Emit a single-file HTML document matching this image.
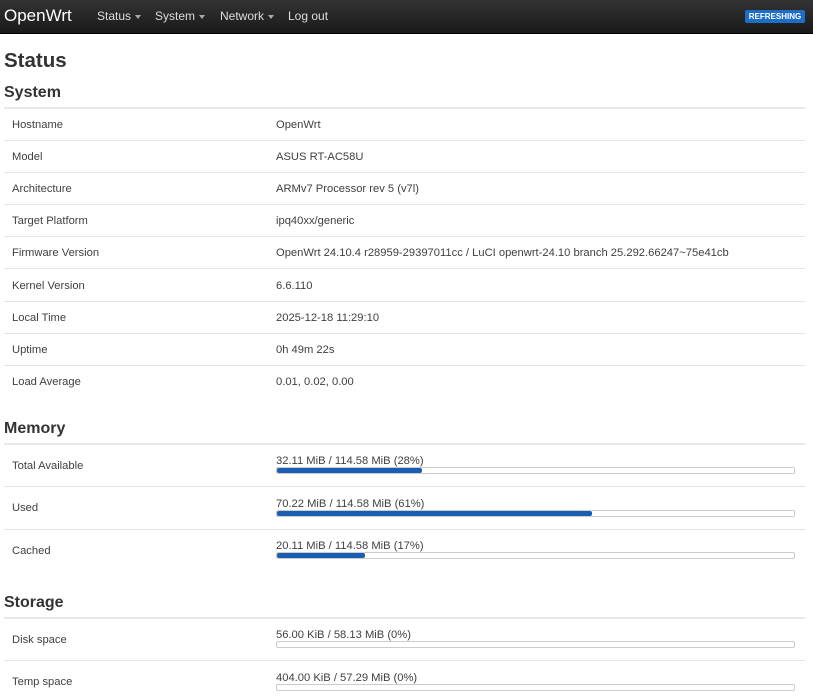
<!DOCTYPE html>
<html><head><style>
body{margin:0;font-family:"Liberation Sans",sans-serif;color:#404040;background:#fff;width:813px;height:700px;overflow:hidden;font-size:11.2px}
.nav{height:33px;background:linear-gradient(#333,#1a1a1a);position:relative;border-bottom:1px solid #000}
.brand{position:absolute;left:4px;top:6px;color:#fff;font-size:17px}
.menu{position:absolute;top:9px;color:#ddd;font-size:12px}
.caret{display:inline-block;border-top:4px solid #aaa;border-left:3.5px solid transparent;border-right:3.5px solid transparent;vertical-align:middle;margin-left:4px}
.badge{position:absolute;left:745px;top:10px;width:60px;height:13px;background:#1e6ec8;color:#fff;font-size:8px;font-weight:bold;text-align:center;line-height:13px;border-radius:2px}
h1{position:absolute;left:4px;top:49px;margin:0;font-size:20.5px;color:#333}
h2{position:absolute;left:4px;margin:0;font-size:16px;color:#333;font-weight:bold}
.line{position:absolute;left:4px;width:801px;height:1px;background:#e4e4e4}
.line.top{height:2px;background:#e8e8e8}
.l{position:absolute;left:12px;margin-top:1px}
.v{position:absolute;left:276px;margin-top:1px}
.bar{position:absolute;left:276px;width:517px;height:5px;border:1px solid #ccc;border-radius:2px;background:#fff}
.bar div{height:5px;background:#1a5eb3;border-radius:2px}
</style></head><body>
<div class="nav"><span class="brand">OpenWrt</span>
<span class="menu" style="left:97px">Status<span class="caret"></span></span>
<span class="menu" style="left:155px">System<span class="caret"></span></span>
<span class="menu" style="left:220px">Network<span class="caret"></span></span>
<span class="menu" style="left:288px">Log out</span>
<span class="badge">REFRESHING</span></div>
<h1>Status</h1>
<h2 style="top:84px">System</h2>
<div class="line top" style="top:107px"></div>
<div class="l" style="top:118px">Hostname</div><div class="v" style="top:118px">OpenWrt</div>
<div class="line" style="top:140px"></div>
<div class="l" style="top:150px">Model</div><div class="v" style="top:150px">ASUS RT-AC58U</div>
<div class="line" style="top:172px"></div>
<div class="l" style="top:182px">Architecture</div><div class="v" style="top:182px">ARMv7 Processor rev 5 (v7l)</div>
<div class="line" style="top:204px"></div>
<div class="l" style="top:214px">Target Platform</div><div class="v" style="top:214px">ipq40xx/generic</div>
<div class="line" style="top:236px"></div>
<div class="l" style="top:246px">Firmware Version</div><div class="v" style="top:246px">OpenWrt 24.10.4 r28959-29397011cc / LuCI openwrt-24.10 branch 25.292.66247~75e41cb</div>
<div class="line" style="top:268px"></div>
<div class="l" style="top:279px">Kernel Version</div><div class="v" style="top:279px">6.6.110</div>
<div class="line" style="top:301px"></div>
<div class="l" style="top:311px">Local Time</div><div class="v" style="top:311px">2025-12-18 11:29:10</div>
<div class="line" style="top:333px"></div>
<div class="l" style="top:343px">Uptime</div><div class="v" style="top:343px">0h 49m 22s</div>
<div class="line" style="top:365px"></div>
<div class="l" style="top:375px">Load Average</div><div class="v" style="top:375px">0.01, 0.02, 0.00</div>
<h2 style="top:420px">Memory</h2>
<div class="line top" style="top:443px"></div>
<div class="l" style="top:459px">Total Available</div><div class="v" style="top:454px">32.11 MiB / 114.58 MiB (28%)</div>
<div class="bar" style="top:467px"><div style="width:28%"></div></div>
<div class="line" style="top:486px"></div>
<div class="l" style="top:501px">Used</div><div class="v" style="top:497px">70.22 MiB / 114.58 MiB (61%)</div>
<div class="bar" style="top:510px"><div style="width:61%"></div></div>
<div class="line" style="top:529px"></div>
<div class="l" style="top:544px">Cached</div><div class="v" style="top:539px">20.11 MiB / 114.58 MiB (17%)</div>
<div class="bar" style="top:552px"><div style="width:17%"></div></div>
<h2 style="top:594px">Storage</h2>
<div class="line top" style="top:617px"></div>
<div class="l" style="top:633px">Disk space</div><div class="v" style="top:628px">56.00 KiB / 58.13 MiB (0%)</div>
<div class="bar" style="top:641px"><div style="width:0"></div></div>
<div class="line" style="top:660px"></div>
<div class="l" style="top:675px">Temp space</div><div class="v" style="top:671px">404.00 KiB / 57.29 MiB (0%)</div>
<div class="bar" style="top:684px"><div style="width:0"></div></div>
</body></html>
